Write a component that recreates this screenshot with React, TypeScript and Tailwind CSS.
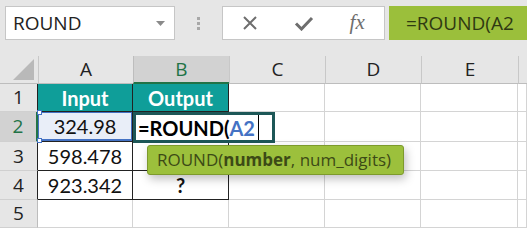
import React from "react";

const ui = { fontFamily: '"Open Sans", "Noto Sans", sans-serif' };
const cell = { fontFamily: 'Lato, "Open Sans", sans-serif' };

const colLetters = ["A", "B", "C", "D", "E", ""];

const data: Record<number, string[]> = {
  1: ["Input", "Output"],
  2: ["324.98", ""],
  3: ["598.478", ""],
  4: ["923.342", "?"],
  5: ["", ""],
};

function TopBar() {
  return (
    <div className="flex h-[56px] items-start bg-[#e6e6e6] pt-[6px] pl-[5px]" style={ui}>
      <div className="flex h-[34px] w-[170px] items-center justify-between border border-[#c6c6c6] bg-white pl-[7px] pr-[9px] text-[19px] text-[#222]">
        <span>ROUND</span>
        <svg width="9" height="5" viewBox="0 0 9 5">
          <path d="M0 0h9L4.5 5z" fill="#8a8a8a" />
        </svg>
      </div>
      <div className="flex h-[34px] w-[47px] flex-col items-center justify-center gap-[2px]">
        <span className="h-[3px] w-[3px] bg-[#a8a8a8]" />
        <span className="h-[3px] w-[3px] bg-[#a8a8a8]" />
        <span className="h-[3px] w-[3px] bg-[#a8a8a8]" />
      </div>
      <div className="flex h-[34px] w-[163px] items-center border border-[#c6c6c6] bg-white">
        <div className="flex w-[54px] justify-center">
          <svg width="16" height="16" viewBox="0 0 16 16">
            <path d="M2 2L14 14M14 2L2 14" stroke="#6e6e6e" strokeWidth="2" />
          </svg>
        </div>
        <div className="flex w-[54px] justify-center">
          <svg width="20" height="16" viewBox="0 0 20 16">
            <path d="M2 8.5L7.5 14L18 3" stroke="#6e6e6e" strokeWidth="3" fill="none" />
          </svg>
        </div>
        <div
          className="flex w-[54px] justify-center text-[21px] italic text-[#6e6e6e]"
          style={{ fontFamily: '"Liberation Serif", serif' }}
        >
          fx
        </div>
      </div>
      <div className="ml-[4px] flex h-[34px] flex-1 items-center bg-[#9bbf3b] pl-[17px] text-[19px] text-[#2f3a12]">
        =ROUND(A2
      </div>
    </div>
  );
}

function Sheet() {
  const rows = [1, 2, 3, 4, 5];
  const heights = ["h-[28px]", "h-[30px]", "h-[29px]", "h-[29px]", "h-[28px]"];
  return (
    <div className="relative">
      <div className="grid grid-cols-[38px_95px_96px_96px_96px_97px_1fr]">
        {/* header row */}
        <div className="flex h-[28px] items-end justify-end border-b border-[#bdbdbd] bg-[#e6e6e6] pr-[4px] pb-[3px]">
          <svg width="21" height="21" viewBox="0 0 21 21">
            <path d="M21 0V21H0z" fill="#b9b9b9" />
          </svg>
        </div>
        {colLetters.map((c, i) => (
          <div
            key={i}
            className={`flex h-[28px] items-center justify-center border-l text-[19px] ${
              c === "B"
                ? "border-[#bdbdbd] border-b-2 border-b-[#217346] bg-[#d2d2d2] text-[#217346]"
                : "border-[#c8c8c8] border-b border-b-[#bdbdbd] bg-[#e6e6e6] text-[#222]"
            }`}
            style={ui}
          >
            {c}
          </div>
        ))}
        {rows.map((r, ri) => (
          <React.Fragment key={r}>
            <div
              className={`flex ${heights[ri]} items-center justify-center border-b border-b-[#d0d0d0] text-[19px] ${
                r === 2
                  ? "border-r-2 border-r-[#217346] bg-[#d2d2d2] text-[#217346]"
                  : r <= 4
                  ? "border-r border-r-[#222] bg-[#e6e6e6] text-[#222]"
                  : "border-r border-r-[#bdbdbd] bg-[#e6e6e6] text-[#222]"
              }`}
              style={ui}
            >
              {r}
            </div>
            {colLetters.map((c, ci) => {
              const inTable = ci < 2 && r <= 4;
              const text = ci < 2 ? data[r][ci] : "";
              if (r === 2 && ci === 0) {
                return (
                  <div key={ci} className={`relative ${heights[ri]} border-b border-r border-[#222]`}>
                    <div
                      className="flex h-full items-center justify-center border border-b-2 border-[#4472c4] bg-[#e9eef8] text-[20px] text-[#111]"
                      style={cell}
                    >
                      {text}
                    </div>
                    <span className="absolute -left-[1px] -top-[2px] h-[5px] w-[5px] border border-[#4472c4] bg-white" />
                    <span className="absolute -left-[1px] -bottom-[2px] h-[5px] w-[5px] border border-[#4472c4] bg-white" />
                  </div>
                );
              }
              return (
                <div
                  key={ci}
                  className={`flex ${heights[ri]} items-center justify-center border-b border-r text-[20px] ${
                    inTable ? "border-[#222]" : "border-[#d4d4d4]"
                  } ${r === 1 && inTable ? "bg-[#0f9e99] font-bold text-white" : "bg-white text-[#111]"} ${
                    text === "?" ? "font-bold" : ""
                  }`}
                  style={cell}
                >
                  {text}
                </div>
              );
            })}
          </React.Fragment>
        ))}
      </div>

      {/* in-cell editor on B2 */}
      <div
        className="absolute left-[133px] top-[56px] flex h-[31px] w-[142px] items-center border-[3px] border-[#1d5757] bg-white pl-[2px] text-[20px] font-bold text-black"
        style={cell}
      >
        <span>=ROUND(</span>
        <span className="text-[#4472c4]">A2</span>
        <span className="ml-[3px] h-full w-[1px] bg-black" />
      </div>

      {/* function tooltip */}
      <div
        className="absolute left-[147px] top-[89px] flex h-[30px] w-[257px] items-center whitespace-nowrap rounded-[3px] border border-[#7d9a2c] bg-[#9cc03c] pl-[9px] text-[17px] text-[#3c4a16] shadow-[2px_4px_10px_rgba(0,0,0,0.25)]"
        style={ui}
      >
        ROUND(<b>number</b>, num_digits)
      </div>
    </div>
  );
}

export default function App() {
  return (
    <div className="h-[228px] w-[527px] overflow-hidden bg-white">
      <TopBar />
      <Sheet />
    </div>
  );
}
